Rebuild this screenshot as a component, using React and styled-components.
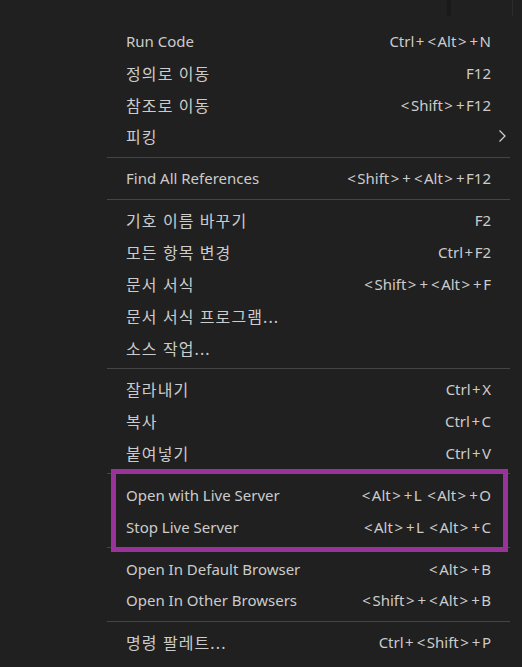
import React from "react";
import styled, { createGlobalStyle } from "styled-components";

const GlobalStyle = createGlobalStyle`
  html, body {
    margin: 0;
    padding: 0;
    background: #202020;
  }
  body {
    width: 522px;
    height: 667px;
    overflow: hidden;
    font-family: "Noto Sans", "Noto Sans CJK KR", sans-serif;
  }
`;

const groups = [
  [
    { label: "Run Code", keys: "Ctrl+<Alt>+N" },
    { label: "정의로 이동", keys: "F12", ko: true },
    { label: "참조로 이동", keys: "<Shift>+F12", ko: true },
    { label: "피킹", submenu: true, ko: true },
  ],
  [{ label: "Find All References", keys: "<Shift>+<Alt>+F12" }],
  [
    { label: "기호 이름 바꾸기", keys: "F2", ko: true },
    { label: "모든 항목 변경", keys: "Ctrl+F2", ko: true },
    { label: "문서 서식", keys: "<Shift>+<Alt>+F", ko: true },
    { label: "문서 서식 프로그램...", ko: true },
    { label: "소스 작업...", ko: true },
  ],
  [
    { label: "잘라내기", keys: "Ctrl+X", ko: true },
    { label: "복사", keys: "Ctrl+C", ko: true },
    { label: "붙여넣기", keys: "Ctrl+V", ko: true },
  ],
  [
    { label: "Open with Live Server", keys: "<Alt>+L <Alt>+O" },
    { label: "Stop Live Server", keys: "<Alt>+L <Alt>+C" },
  ],
  [
    { label: "Open In Default Browser", keys: "<Alt>+B" },
    { label: "Open In Other Browsers", keys: "<Shift>+<Alt>+B" },
  ],
  [{ label: "명령 팔레트...", keys: "Ctrl+<Shift>+P", ko: true }],
];

const Chevron = () => (
  <svg width="9" height="14" viewBox="0 0 9 14" fill="none">
    <path d="M1.5 1.5 L7 7 L1.5 12.5" stroke="#cccccc" strokeWidth="1.3" />
  </svg>
);

// Segoe-style keybinding: < > + have wide side bearings
const Keybinding = ({ text }) => (
  <Styled.Keys>
    {text.split(/([<>+])/).map((part, i) =>
      /^[<>+]$/.test(part) ? <Styled.Sym key={i}>{part}</Styled.Sym> : part
    )}
  </Styled.Keys>
);

export default function App() {
  return (
    <>
      <GlobalStyle />
      <Styled.Page>
        <Styled.TopStrip>
          <Styled.Shade />
          <Styled.Edge />
        </Styled.TopStrip>
        <Styled.Menu>
          {groups.map((group, gi) => (
            <React.Fragment key={gi}>
              {gi > 0 && <Styled.Separator />}
              {group.map((item) => (
                <Styled.Item key={item.label}>
                  <Styled.Label $ko={item.ko}>{item.label}</Styled.Label>
                  {item.keys && <Keybinding text={item.keys} />}
                  {item.submenu && (
                    <Styled.Arrow>
                      <Chevron />
                    </Styled.Arrow>
                  )}
                </Styled.Item>
              ))}
            </React.Fragment>
          ))}
          <Styled.Highlight />
        </Styled.Menu>
      </Styled.Page>
    </>
  );
}

const Styled = {
  Page: styled.div`
    width: 522px;
    height: 667px;
    background: #202020;
    color: #cccccc;
    display: flex;
    flex-direction: column;
  `,
  TopStrip: styled.div`
    height: 16px;
    display: flex;
    padding-left: 447px;
  `,
  Shade: styled.div`
    width: 4px;
    background: #1a1a1a;
  `,
  Edge: styled.div`
    width: 1px;
    margin-left: 61px;
    background: #2c2c2c;
  `,
  Menu: styled.div`
    position: relative;
    margin: 9px 0 0 107px;
    width: 403px;
    display: flex;
    flex-direction: column;
  `,
  Item: styled.div`
    height: 31.85px;
    display: flex;
    align-items: center;
    padding: 0 19px;
    font-size: 15px;
    position: relative;
  `,
  Label: styled.span`
    flex: 1;
    white-space: nowrap;
    font-size: ${(p) => (p.$ko ? "16px" : "15px")};
    letter-spacing: ${(p) => (p.$ko ? "1.1px" : "0")};
  `,
  Keys: styled.span`
    white-space: nowrap;
  `,
  Sym: styled.span`
    padding: 0 1.5px;
  `,
  Arrow: styled.span`
    position: absolute;
    right: 3px;
    top: 50%;
    transform: translateY(-50%);
    display: flex;
  `,
  Separator: styled.div`
    height: 1px;
    margin: 4.5px 0;
    background: #454545;
  `,
  Highlight: styled.div`
    position: absolute;
    left: 4px;
    top: 444px;
    width: 387px;
    height: 73px;
    border: 5px solid #993399;
    pointer-events: none;
  `,
};
